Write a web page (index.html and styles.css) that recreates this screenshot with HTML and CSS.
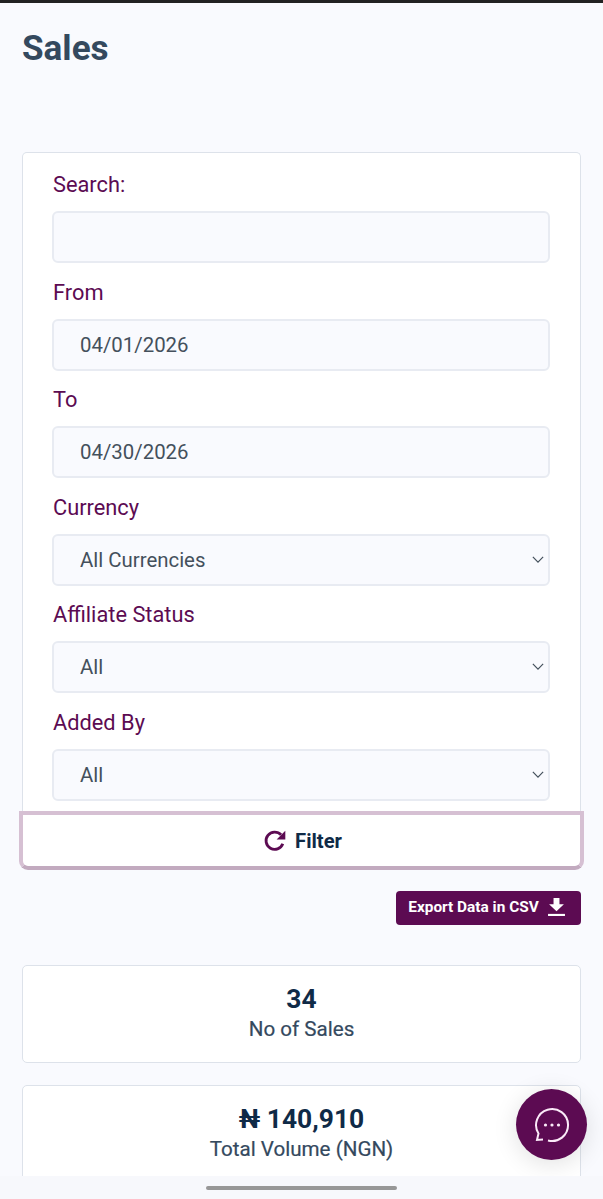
FILE: index.html
```html
<!DOCTYPE html>
<html lang="en">
<head>
    <meta charset="UTF-8">
    <meta name="viewport" content="width=device-width, initial-scale=1.0">
    <title>Sales</title>
    <link rel="stylesheet" href="styles.css">
</head>
<body>
    <div class="topline"></div>

    <main class="page">
        <h1 class="title">Sales</h1>

        <form class="filters">
            <div class="field">
                <label class="label">Search:</label>
                <input class="control" type="text">
            </div>
            <div class="field">
                <label class="label">From</label>
                <input class="control" type="text" value="04/01/2026">
            </div>
            <div class="field">
                <label class="label">To</label>
                <input class="control" type="text" value="04/30/2026">
            </div>
            <div class="field">
                <label class="label">Currency</label>
                <div class="select-wrap">
                    <select class="control"><option>All Currencies</option></select>
                    <svg class="chevron" viewBox="0 0 14 8"><path d="M1 1l6 6 6-6"/></svg>
                </div>
            </div>
            <div class="field">
                <label class="label">Affiliate Status</label>
                <div class="select-wrap">
                    <select class="control"><option>All</option></select>
                    <svg class="chevron" viewBox="0 0 14 8"><path d="M1 1l6 6 6-6"/></svg>
                </div>
            </div>
            <div class="field">
                <label class="label">Added By</label>
                <div class="select-wrap">
                    <select class="control"><option>All</option></select>
                    <svg class="chevron" viewBox="0 0 14 8"><path d="M1 1l6 6 6-6"/></svg>
                </div>
            </div>
        </form>

        <button class="filter-btn" type="button">
            <svg class="filter-icon" viewBox="0 0 24 24"><path d="M19.2 14.6A8 8 0 1 1 17.6 6.3"/><path class="fill" d="M21.5 2.5v8h-8z"/></svg>
            Filter
        </button>

        <div class="export-row">
            <button class="export-btn" type="button">
                Export Data in CSV
                <svg class="export-icon" viewBox="0 0 16 17"><path d="M5.2 0h5.6v6H15L8 12.6 1 6h4.2z"/><path d="M0 15h16v2H0z"/></svg>
            </button>
        </div>

        <section class="stat">
            <div class="stat-value">34</div>
            <div class="stat-name">No of Sales</div>
        </section>
        <section class="stat">
            <div class="stat-value">₦ 140,910</div>
            <div class="stat-name">Total Volume (NGN)</div>
        </section>
    </main>

    <button class="chat" type="button">
        <svg viewBox="0 0 36 36"><path d="M14 33.5A16 16 0 1 0 4.5 26.5L3 33L9 32.5"/><circle class="dot" cx="11.5" cy="18" r="1.6"/><circle class="dot" cx="18" cy="18" r="1.6"/><circle class="dot" cx="24.5" cy="18" r="1.6"/></svg>
    </button>

    <div class="navbar"><div class="pill"></div></div>
</body>
</html>
```

FILE: styles.css
```css
* {
    box-sizing: border-box;
}

html, body {
    height: 1199px;
    margin: 0;
    overflow: hidden;
}

body {
    position: relative;
    font-family: Roboto, "Liberation Sans", sans-serif;
    background-color: #f9fafe;
    color: #0f2a47;
}

.topline {
    height: 3px;
    background-color: #222;
}

.page {
    padding: 0 22px;
}

.title {
    margin: 0;
    padding-top: 25px;
    height: 149px;
    font-size: 35.1px;
    line-height: 40px;
    font-weight: 700;
    color: #34495e;
}

.filters {
    background-color: #fff;
    border: 1px solid #dde2ea;
    border-bottom: none;
    border-radius: 5px 5px 0 0;
    padding: 16px 30px 11px 29px;
    height: 660px;
}

.field {
    height: 107.6px;
}

.label {
    display: block;
    height: 42px;
    padding: 1px 0 0 1px;
    font-size: 21.8px;
    line-height: 30px;
    color: #5c0b52;
}

.control {
    display: block;
    width: 100%;
    height: 52px;
    padding: 0 26px;
    font-family: inherit;
    font-size: 20.4px;
    color: #44505c;
    background-color: #f9fafe;
    border: 2px solid #e8ebf2;
    border-radius: 6px;
    appearance: none;
    outline: none;
}

.select-wrap {
    position: relative;
}

.chevron {
    position: absolute;
    right: 6px;
    top: 22px;
    width: 12px;
    height: 7px;
    fill: none;
    stroke: #44505c;
    stroke-width: 1.4;
}

.filter-btn {
    display: flex;
    align-items: center;
    justify-content: center;
    gap: 7px;
    width: 565px;
    height: 59px;
    margin: -1px 0 0 -3px;
    padding: 0 0 0 1px;
    position: relative;
    font-family: inherit;
    font-size: 20.2px;
    font-weight: 700;
    color: #0f2a47;
    background-color: #fff;
    border: 4px solid #d6c0d3;
    border-bottom-color: #c2aabf;
    border-radius: 0 0 9px 9px;
}

.filter-icon {
    width: 26px;
    height: 26px;
    fill: none;
    stroke: #5c0b52;
    stroke-width: 2.6;
}

.filter-icon .fill {
    fill: #5c0b52;
    stroke: none;
}

.export-row {
    display: flex;
    justify-content: flex-end;
    margin: 21px 0 40px;
}

.export-btn {
    display: flex;
    align-items: center;
    justify-content: center;
    gap: 9px;
    width: 185px;
    height: 34px;
    padding: 0 4px 2px 0;
    font-family: inherit;
    font-size: 15.4px;
    font-weight: 700;
    color: #fff;
    background-color: #5c0b52;
    border: none;
    border-radius: 4px;
}

.export-icon {
    width: 17px;
    height: 18px;
    fill: #fff;
}

.stat {
    height: 98px;
    margin-bottom: 22px;
    padding-top: 17px;
    text-align: center;
    background-color: #fff;
    border: 1px solid #dde2ea;
    border-radius: 5px;
}

.stat-value {
    font-size: 26.4px;
    line-height: 32px;
    font-weight: 700;
    color: #0f2a47;
}

.stat-name {
    font-size: 20.6px;
    line-height: 28px;
    font-weight: 400;
    color: #34495e;
    -webkit-text-stroke: 0.2px #34495e;
}

.chat {
    position: absolute;
    left: 516px;
    top: 1089px;
    display: flex;
    align-items: center;
    justify-content: center;
    width: 71px;
    height: 71px;
    padding: 0;
    background-color: #5c0b52;
    border: none;
    border-radius: 50%;
    box-shadow: 0 4px 24px rgba(0, 0, 0, 0.12);
}

.chat svg {
    width: 36px;
    height: 36px;
    fill: none;
    stroke: #fbeaf8;
    stroke-width: 2;
}

.chat .dot {
    fill: #fbeaf8;
    stroke: none;
}

.navbar {
    position: absolute;
    left: 0;
    right: 0;
    top: 1176px;
    height: 23px;
    padding-top: 10px;
    background-color: #f7f8fc;
}

.pill {
    width: 191px;
    height: 4px;
    margin-left: 206px;
    background-color: #979797;
    border-radius: 2px;
}
```
